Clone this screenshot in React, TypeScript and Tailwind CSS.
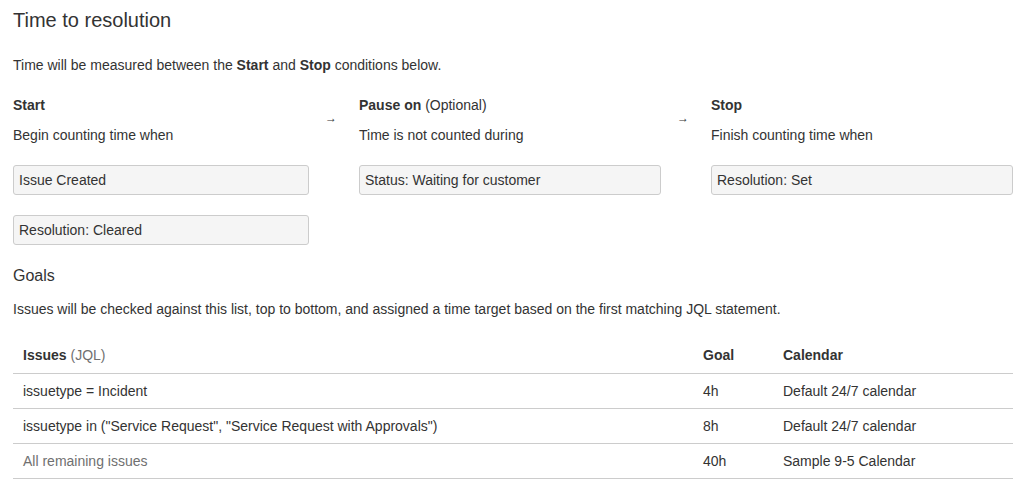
import React from "react";

const rows = [
  { jql: "issuetype = Incident", goal: "4h", calendar: "Default 24/7 calendar", muted: false },
  {
    jql: 'issuetype in ("Service Request", "Service Request with Approvals")',
    goal: "8h",
    calendar: "Default 24/7 calendar",
    muted: false,
  },
  { jql: "All remaining issues", goal: "40h", calendar: "Sample 9-5 Calendar", muted: true },
];

function Condition({ text }: { text: string }) {
  return (
    <div className="h-[30px] flex items-center rounded-[3px] border border-[#cccccc] bg-[#f5f5f5] px-[5px] text-[14px] text-[#333333]">
      {text}
    </div>
  );
}

function Arrow() {
  return (
    <div className="flex justify-center pt-[16px] text-[12px] leading-[14px] text-[#333333] pr-[6px]">→</div>
  );
}

export default function App() {
  return (
    <div
      className="w-[1025px] h-[493px] bg-white px-[13px] pt-[8px] text-[#333333] text-[14px] leading-[20px] overflow-hidden"
      style={{ fontFamily: '"Liberation Sans", Arial, sans-serif' }}
    >
      <h2 className="text-[20px] leading-[24px] font-normal">Time to resolution</h2>

      <p className="mt-[23px]">
        Time will be measured between the <strong>Start</strong> and <strong>Stop</strong> conditions below.
      </p>

      {/* Start / Pause / Stop */}
      <div className="mt-[20px] grid grid-cols-[296px_50px_302px_50px_302px]">
        <div>
          <div className="font-bold">Start</div>
          <div className="mt-[10px]">Begin counting time when</div>
          <div className="mt-[20px] flex flex-col gap-[20px]">
            <Condition text="Issue Created" />
            <Condition text="Resolution: Cleared" />
          </div>
        </div>
        <Arrow />
        <div>
          <div>
            <span className="font-bold">Pause on</span> (Optional)
          </div>
          <div className="mt-[10px]">Time is not counted during</div>
          <div className="mt-[20px]">
            <Condition text="Status: Waiting for customer" />
          </div>
        </div>
        <Arrow />
        <div>
          <div className="font-bold">Stop</div>
          <div className="mt-[10px]">Finish counting time when</div>
          <div className="mt-[20px]">
            <Condition text="Resolution: Set" />
          </div>
        </div>
      </div>

      {/* Goals */}
      <h3 className="mt-[19px] text-[16px] leading-[24px] font-normal">Goals</h3>
      <p className="mt-[11px]">
        Issues will be checked against this list, top to bottom, and assigned a time target based on the first
        matching JQL statement.
      </p>

      <table className="mt-[19px] w-[1000px] border-collapse">
        <thead>
          <tr className="border-b border-[#cccccc]">
            <th className="h-[35px] px-[10px] text-left font-bold w-[680px]">
              Issues <span className="font-normal text-[#707070]">(JQL)</span>
            </th>
            <th className="h-[35px] px-[10px] text-left font-bold w-[80px]">Goal</th>
            <th className="h-[35px] px-[10px] text-left font-bold">Calendar</th>
          </tr>
        </thead>
        <tbody>
          {rows.map((r) => (
            <tr key={r.jql} className="border-b border-[#cccccc]">
              <td className={`h-[35px] px-[10px] ${r.muted ? "text-[#707070]" : ""}`}>{r.jql}</td>
              <td className="h-[35px] px-[10px]">{r.goal}</td>
              <td className="h-[35px] px-[10px]">{r.calendar}</td>
            </tr>
          ))}
        </tbody>
      </table>
    </div>
  );
}
